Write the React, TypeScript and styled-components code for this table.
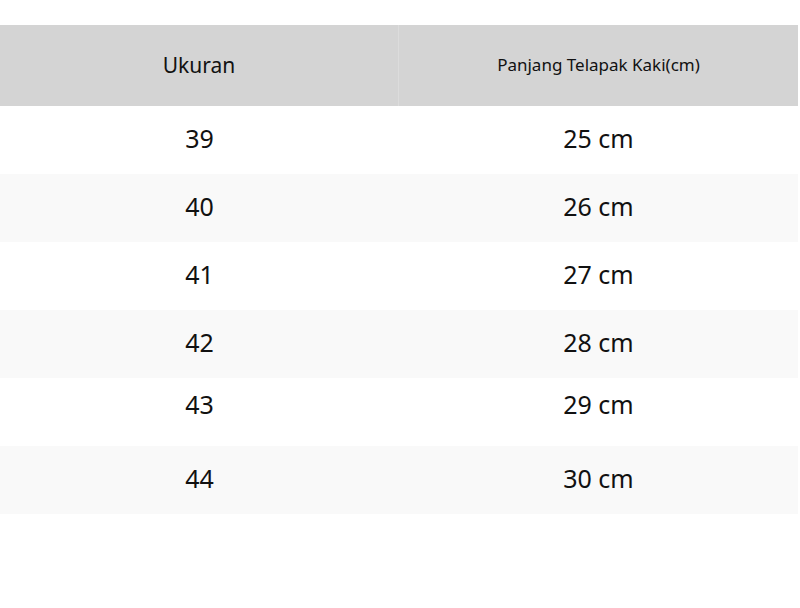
import styled, { createGlobalStyle } from "styled-components";

const GlobalStyle = createGlobalStyle`
  html, body {
    margin: 0;
    padding: 0;
    background: #ffffff;
    font-family: "Noto Sans", "Open Sans", sans-serif;
    color: #111111;
  }
`;

const Page = styled.div`
  padding-top: 25px;
  width: 798px;
`;

const Table = styled.div`
  display: flex;
  flex-direction: column;
`;

const HeaderRow = styled.div`
  display: grid;
  grid-template-columns: 399px 1fr;
  height: 81px;
  background: #d4d4d4;
`;

const HeaderCell = styled.div<{ $small?: boolean; $divider?: boolean }>`
  display: flex;
  align-items: center;
  justify-content: center;
  font-size: ${(p) => (p.$small ? "17px" : "21px")};
  padding-bottom: ${(p) => (p.$small ? "3px" : "1px")};
  border-right: ${(p) => (p.$divider ? "1px solid #dcdcdc" : "none")};
`;

const Row = styled.div<{ $striped: boolean; $lift?: number }>`
  display: grid;
  grid-template-columns: 399px 1fr;
  height: 68px;
  background: ${(p) => (p.$striped ? "#f9f9f9" : "#ffffff")};
  padding-bottom: ${(p) => (p.$lift ? `${p.$lift}px` : "0")};
  box-sizing: border-box;
`;

const Cell = styled.div`
  display: flex;
  align-items: center;
  justify-content: center;
  font-size: 25px;
  padding-bottom: 5px;
`;

const sizes = [
  { size: "39", length: "25 cm" },
  { size: "40", length: "26 cm" },
  { size: "41", length: "27 cm" },
  { size: "42", length: "28 cm" },
  { size: "43", length: "29 cm", lift: 12 },
  { size: "44", length: "30 cm" },
];

export default function App() {
  return (
    <>
      <GlobalStyle />
      <Page>
        <Table>
          <HeaderRow>
            <HeaderCell $divider>Ukuran</HeaderCell>
            <HeaderCell $small>Panjang Telapak Kaki(cm)</HeaderCell>
          </HeaderRow>
          {sizes.map((r, i) => (
            <Row key={r.size} $striped={i % 2 === 1} $lift={r.lift}>
              <Cell>{r.size}</Cell>
              <Cell>{r.length}</Cell>
            </Row>
          ))}
        </Table>
      </Page>
    </>
  );
}
